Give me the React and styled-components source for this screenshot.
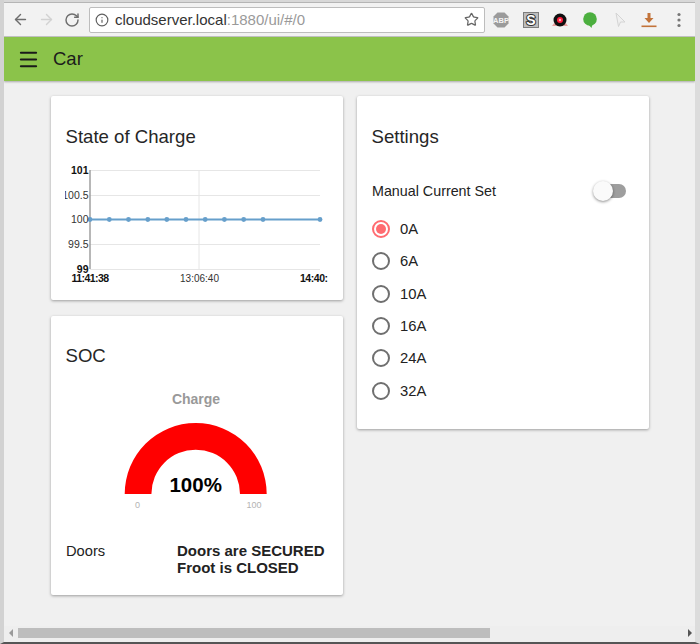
import { createGlobalStyle } from "styled-components";
import styled from "styled-components";
import { ArrowLeft, ArrowRight, RotateCw, Info, Star, Menu } from "lucide-react";

const GlobalStyle = createGlobalStyle`
  html, body {
    margin: 0;
    padding: 0;
    background: #333;
    overflow: hidden;
  }
  * {
    box-sizing: border-box;
  }
`;

const Window = styled.div`
  width: 700px;
  height: 644px;
  display: flex;
  flex-direction: column;
  overflow: hidden;
  background: #f0f0f0;
  border-left: 4px solid #d2d2d2;
  border-right: 5px solid #dcdcdc;
  border-bottom: 2px solid #555;
  font-family: "Liberation Sans", sans-serif;
  color: #222;
`;

const TabStrip = styled.div`
  height: 3px;
  background: #d8d8d8;
  border-bottom: 1px solid #b5b5b5;
`;

const Toolbar = styled.div`
  height: 34px;
  display: flex;
  align-items: center;
  padding-left: 8px;
  background: #f2f2f2;
  border-bottom: 1px solid #c4c4c4;
`;

const NavButton = styled.div`
  width: 26px;
  display: flex;
  justify-content: flex-start;
  color: ${({ $muted }) => ($muted ? "#d2d2d2" : "#6e6e6e")};
`;

const AddressBar = styled.div`
  width: 396px;
  height: 26px;
  margin-left: -1px;
  padding: 0 5px 0 5px;
  display: flex;
  align-items: center;
  background: #fff;
  border: 1px solid #bdbdbd;
  border-radius: 2px;
  font-size: 15px;
  color: #333;
`;

const Host = styled.span`
  margin-left: 6px;
`;

const UrlRest = styled.span`
  flex: 1;
  color: #9a9a9a;
`;

const Extensions = styled.div`
  flex: 1;
  display: flex;
  align-items: center;
  justify-content: space-between;
  padding: 0 7px 0 7px;
`;

const ExtIcon = styled.svg`
  width: 18px;
  height: 18px;
  display: block;
`;

const AppBar = styled.header`
  height: 44px;
  display: flex;
  align-items: center;
  padding-left: 13px;
  gap: 13px;
  background: #8bc34a;
  box-shadow: 0 1px 2px rgba(0, 0, 0, 0.3);
  color: #1c1c1c;
`;

const AppTitle = styled.h1`
  margin: 0;
  font-size: 18.5px;
  font-weight: 400;
`;

const Content = styled.main`
  flex: 1;
  display: flex;
  gap: 14px;
  padding: 15px 0 0 47px;
`;

const Column = styled.div`
  width: 292px;
  display: flex;
  flex-direction: column;
  gap: 15.5px;
`;

const Card = styled.section`
  width: 292px;
  height: ${({ $height }) => $height}px;
  padding: ${({ $top }) => $top || 31}px 15px 0;
  background: #fff;
  border-radius: 2px;
  box-shadow: 0 1px 3px rgba(0, 0, 0, 0.35);
`;

const CardTitle = styled.h2`
  margin: 0 0 0 -0.5px;
  font-size: 18.6px;
  line-height: 20px;
  font-weight: 400;
  color: #262626;
`;

const ChartSvg = styled.svg`
  display: block;
  margin: 13px 0 0 -1px;
`;

const GaugeTitle = styled.div`
  margin-top: 25px;
  padding-right: 2px;
  text-align: center;
  font-size: 14px;
  font-weight: 700;
  color: #999;
`;

const GaugeSvg = styled.svg`
  display: block;
  margin: 0 0 0 30px;
`;

const DoorsRow = styled.div`
  margin-top: 20px;
  display: grid;
  grid-template-columns: 111px 1fr;
  font-size: 14.7px;
  line-height: 17px;
`;

const DoorsLabel = styled.span`
  padding-top: 1px;
`;

const DoorsStatus = styled.div`
  font-weight: 700;
  font-size: 15px;
  white-space: nowrap;
`;

const SwitchRow = styled.div`
  margin-top: 34px;
  height: 20px;
  display: flex;
  align-items: center;
  justify-content: space-between;
  padding-right: 8px;
  font-size: 14.3px;
`;

const Switch = styled.div`
  position: relative;
  width: 32px;
  height: 14px;
  border-radius: 7px;
  background: #9e9e9e;
`;

const Thumb = styled.div`
  position: absolute;
  left: -1px;
  top: -3px;
  width: 20px;
  height: 20px;
  border-radius: 50%;
  background: #fafafa;
  box-shadow: 0 1px 3px rgba(0, 0, 0, 0.45);
`;

const RadioList = styled.div`
  margin-top: 12px;
  display: flex;
  flex-direction: column;
`;

const RadioRow = styled.label`
  height: 32.3px;
  display: flex;
  align-items: center;
  gap: 10px;
  font-size: 14.8px;
`;

const RadioRing = styled.span`
  width: 18px;
  height: 18px;
  display: flex;
  align-items: center;
  justify-content: center;
  border-radius: 50%;
  border: 2px solid ${({ $checked }) => ($checked ? "#ff6b70" : "#6f6f6f")};
`;

const RadioDot = styled.span`
  width: 10px;
  height: 10px;
  border-radius: 50%;
  background: #ff6b70;
`;

const Scrollbar = styled.div`
  height: 16px;
  flex: none;
  display: flex;
  align-items: flex-start;
  padding: 2px 3px 0 5px;
  background: #eeeeee;
`;

const ScrollArrow = styled.span`
  width: 0;
  height: 0;
  margin-top: 1px;
  border-top: 4px solid transparent;
  border-bottom: 4px solid transparent;
  border-right: ${({ $dir }) => ($dir === "left" ? "4px solid #9a9a9a" : "0")};
  border-left: ${({ $dir }) => ($dir === "right" ? "4px solid #555" : "0")};
`;

const ScrollTrack = styled.div`
  flex: 1;
  padding-left: 5px;
`;

const ScrollThumb = styled.div`
  width: 472px;
  height: 10px;
  background: #bdbdbd;
`;

const CURRENTS = ["0A", "6A", "10A", "16A", "24A", "32A"];
const POINTS = [90, 109.3, 128.5, 147.8, 166.8, 186, 205.2, 224.4, 243.7, 263, 320];

function Chart() {
  const x = (v) => v - 65;
  const rows = [
    { y: 10.5, label: "101", bold: true },
    { y: 35.5, label: "100.5" },
    { y: 59.5, label: "100" },
    { y: 84.5, label: "99.5" },
    { y: 109.5, label: "99", bold: true },
  ];
  return (
    <ChartSvg width="264" height="126" viewBox="0 0 264 126">
      {rows.map((r) => (
        <line key={r.y} x1={x(90)} x2={x(320)} y1={r.y} y2={r.y} stroke="#e6e6e6" />
      ))}
      <line x1={x(199)} x2={x(199)} y1="10" y2="109" stroke="#e6e6e6" />
      <line x1={x(90)} x2={x(90)} y1="10" y2="109" stroke="#999" strokeWidth="1.4" />
      <line x1={x(90)} x2={x(320)} y1="59.5" y2="59.5" stroke="#669fcb" strokeWidth="2" />
      {POINTS.map((p) => (
        <circle key={p} cx={x(p)} cy="59.5" r="2.4" fill="#669fcb" />
      ))}
      <g fontFamily="Liberation Sans, sans-serif" fontSize="10.5" textAnchor="end">
        {rows.map((r) => (
          <text key={r.label} x={x(88.5)} y={r.y + 3.3} fontWeight={r.bold ? 700 : 400} fill={r.bold ? "#111" : "#333"}>
            {r.label}
          </text>
        ))}
      </g>
      <g fontFamily="Liberation Sans, sans-serif" fontSize="10">
        <text x={x(71.5)} y="122" fontWeight="700" fontSize="10.5" textLength="37.5" lengthAdjust="spacing" fill="#111">11:41:38</text>
        <text x={x(199.5)} y="122" textAnchor="middle" fill="#333">13:06:40</text>
        <text x={x(300)} y="122" fontWeight="700" fontSize="10.5" textLength="28" lengthAdjust="spacing" fill="#111">14:40:</text>
      </g>
    </ChartSvg>
  );
}

function Gauge() {
  return (
    <GaugeSvg width="200" height="115" viewBox="0 0 200 115">
      <path d="M28.7 87 A71 71 0 0 1 170.7 87 L144 87 A44.3 44.3 0 0 0 55.4 87 Z" fill="#ff0000" />
      <text x="99.7" y="85" textAnchor="middle" fontFamily="Liberation Sans, sans-serif" fontWeight="700" fontSize="20.5" fill="#000">
        100%
      </text>
      <text x="41.5" y="101" textAnchor="middle" fontFamily="Liberation Sans, sans-serif" fontSize="9" fill="#b3b3b3">0</text>
      <text x="158" y="101" textAnchor="middle" fontFamily="Liberation Sans, sans-serif" fontSize="9" fill="#b3b3b3">100</text>
    </GaugeSvg>
  );
}

function BrowserExtensions() {
  return (
    <Extensions>
      <ExtIcon viewBox="0 0 18 18">
        <polygon points="5.5,1.5 12.5,1.5 16.5,5.5 16.5,12.5 12.5,16.5 5.5,16.5 1.5,12.5 1.5,5.5" fill="#9b9b9b" />
        <text x="9" y="12" textAnchor="middle" fontFamily="Liberation Sans, sans-serif" fontSize="7.5" fontWeight="700" fill="#f4f4f4">ABP</text>
      </ExtIcon>
      <ExtIcon viewBox="0 0 18 18">
        <rect x="1.5" y="1.5" width="15" height="15" fill="#bdbdbd" stroke="#7d7d7d" />
        <text x="9" y="14" textAnchor="middle" fontFamily="Liberation Sans, sans-serif" fontSize="14" fontWeight="700" fill="#fff" stroke="#333" strokeWidth="2" paintOrder="stroke">S</text>
      </ExtIcon>
      <ExtIcon viewBox="0 0 18 18">
        <path d="M1 15 L4 11 L14 11 L17 15 Z" fill="#e9a0a0" />
        <circle cx="9" cy="9" r="6.5" fill="#111" />
        <circle cx="9" cy="9" r="3" fill="#ff1f3d" />
        <circle cx="9" cy="9" r="1.2" fill="#ffb0b8" />
      </ExtIcon>
      <ExtIcon viewBox="0 0 18 18">
        <circle cx="9" cy="8" r="6.8" fill="#4caf3f" />
        <path d="M7 13 L10.5 17 L11.5 13 Z" fill="#4caf3f" />
      </ExtIcon>
      <ExtIcon viewBox="0 0 18 18">
        <path d="M5 2 L14 11 L9.5 11 L7.5 15.5 Z" fill="#f0f0f0" stroke="#d4d4d4" />
      </ExtIcon>
      <ExtIcon viewBox="0 0 18 18">
        <path d="M7.5 2 H10.5 V7 H13.5 L9 12 L4.5 7 H7.5 Z" fill="#c2733a" />
        <rect x="1.5" y="14.5" width="15" height="1.6" fill="#c2733a" />
      </ExtIcon>
      <ExtIcon viewBox="0 0 18 18">
        <circle cx="9" cy="3.5" r="1.6" fill="#777" />
        <circle cx="9" cy="9" r="1.6" fill="#777" />
        <circle cx="9" cy="14.5" r="1.6" fill="#777" />
      </ExtIcon>
    </Extensions>
  );
}

export default function App() {
  return (
    <>
      <GlobalStyle />
      <Window>
        <TabStrip />
        <Toolbar>
          <NavButton><ArrowLeft size={17} strokeWidth={2} /></NavButton>
          <NavButton $muted><ArrowRight size={17} strokeWidth={2} /></NavButton>
          <NavButton><RotateCw size={16} strokeWidth={2.2} /></NavButton>
          <AddressBar>
            <Info size={14} color="#5f5f5f" />
            <Host>cloudserver.local</Host>
            <UrlRest>:1880/ui/#/0</UrlRest>
            <Star size={15} color="#666" strokeWidth={2} />
          </AddressBar>
          <BrowserExtensions />
        </Toolbar>
        <AppBar>
          <Menu size={23} strokeWidth={2} color="#1a1a1a" />
          <AppTitle>Car</AppTitle>
        </AppBar>
        <Content>
          <Column>
            <Card $height={204}>
              <CardTitle>State of Charge</CardTitle>
              <Chart />
            </Card>
            <Card $height={279.5} $top={30}>
              <CardTitle>SOC</CardTitle>
              <GaugeTitle>Charge</GaugeTitle>
              <Gauge />
              <DoorsRow>
                <DoorsLabel>Doors</DoorsLabel>
                <DoorsStatus>
                  Doors are SECURED
                  <br />
                  Froot is CLOSED
                </DoorsStatus>
              </DoorsRow>
            </Card>
          </Column>
          <Column>
            <Card $height={333}>
              <CardTitle>Settings</CardTitle>
              <SwitchRow>
                <span>Manual Current Set</span>
                <Switch><Thumb /></Switch>
              </SwitchRow>
              <RadioList>
                {CURRENTS.map((c, i) => (
                  <RadioRow key={c}>
                    <RadioRing $checked={i === 0}>{i === 0 && <RadioDot />}</RadioRing>
                    {c}
                  </RadioRow>
                ))}
              </RadioList>
            </Card>
          </Column>
        </Content>
        <Scrollbar>
          <ScrollArrow $dir="left" />
          <ScrollTrack><ScrollThumb /></ScrollTrack>
          <ScrollArrow $dir="right" />
        </Scrollbar>
      </Window>
    </>
  );
}
